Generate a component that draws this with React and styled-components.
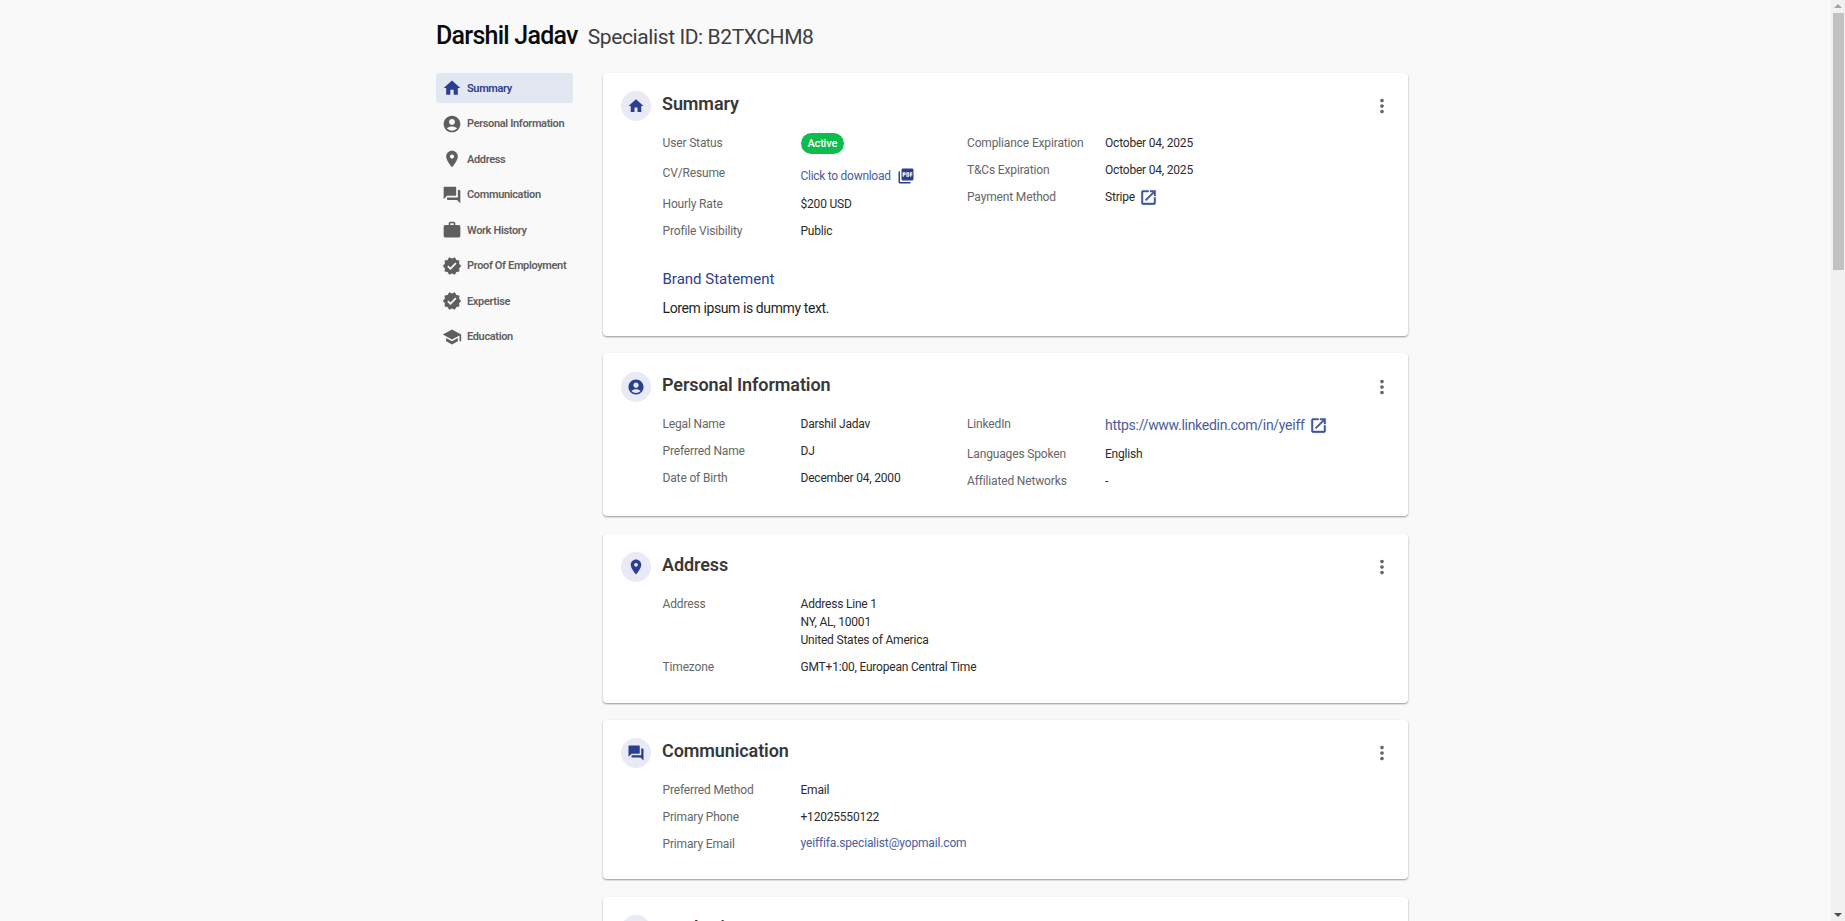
import React from "react";
import styled, { createGlobalStyle } from "styled-components";

const FONT = `"Roboto", "Liberation Sans", sans-serif`;

const ICONS = {
  home: "M10 20v-6h4v6h5v-8h3L12 3 2 12h3v8z",
  person:
    "M12 2C6.48 2 2 6.48 2 12s4.48 10 10 10 10-4.48 10-10S17.52 2 12 2zm0 4c1.93 0 3.5 1.57 3.5 3.5S13.93 13 12 13s-3.5-1.57-3.5-3.5S10.07 6 12 6zm0 14c-2.03 0-4.43-.82-6.14-2.88C7.55 15.8 9.68 15 12 15s4.45.8 6.14 2.12C16.43 19.18 14.03 20 12 20z",
  place:
    "M12 2C8.13 2 5 5.13 5 9c0 5.25 7 13 7 13s7-7.75 7-13c0-3.87-3.13-7-7-7zm0 9.5c-1.38 0-2.5-1.12-2.5-2.5s1.12-2.5 2.5-2.5 2.5 1.12 2.5 2.5-1.12 2.5-2.5 2.5z",
  forum:
    "M21 6h-2v9H6v2c0 .55.45 1 1 1h11l4 4V7c0-.55-.45-1-1-1zm-4 6V3c0-.55-.45-1-1-1H3c-.55 0-1 .45-1 1v14l4-4h10c.55 0 1-.45 1-1z",
  work: "M20 6h-4V4c0-1.11-.89-2-2-2h-4c-1.11 0-2 .89-2 2v2H4c-1.11 0-1.99.89-1.99 2L2 19c0 1.11.89 2 2 2h16c1.11 0 2-.89 2-2V8c0-1.11-.89-2-2-2zm-6 0h-4V4h4v2z",
  verified:
    "M23 12l-2.44-2.79.34-3.69-3.61-.82-1.89-3.2L12 2.96 8.6 1.5 6.71 4.69 3.1 5.5l.34 3.7L1 12l2.44 2.79-.34 3.7 3.61.82L8.6 22.5l3.4-1.47 3.4 1.46 1.89-3.19 3.61-.82-.34-3.69L23 12zm-12.91 4.72l-3.8-3.81 1.48-1.48 2.32 2.33 5.85-5.87 1.48 1.48-7.33 7.35z",
  school:
    "M5 13.18v4L12 21l7-3.82v-4L12 17l-7-3.82zM12 3L1 9l11 6 9-4.91V17h2V9L12 3z",
  more: "M12 8c1.1 0 2-.9 2-2s-.9-2-2-2-2 .9-2 2 .9 2 2 2zm0 2c-1.1 0-2 .9-2 2s.9 2 2 2 2-.9 2-2-.9-2-2-2zm0 6c-1.1 0-2 .9-2 2s.9 2 2 2 2-.9 2-2-.9-2-2-2z",
  open: "M19 19H5V5h7V3H5c-1.11 0-2 .9-2 2v14c0 1.1.89 2 2 2h14c1.1 0 2-.9 2-2v-7h-2v7zM14 3v2h3.59l-9.83 9.83 1.41 1.41L19 6.41V10h2V3h-7z",
  pdf: "M20 2H8c-1.1 0-2 .9-2 2v12c0 1.1.9 2 2 2h12c1.1 0 2-.9 2-2V4c0-1.1-.9-2-2-2zm-8.5 7.5c0 .83-.67 1.5-1.5 1.5H9v2H7.5V7H10c.83 0 1.5.67 1.5 1.5v1zm5 2c0 .83-.67 1.5-1.5 1.5h-2.5V7H15c.83 0 1.5.67 1.5 1.5v3zm4-3H19v1h1.5V11H19v2h-1.5V7h3v1.5zM9 9.5h1v-1H9v1zM4 6H2v14c0 1.1.9 2 2 2h14v-2H4V6zm10 5.5h1v-3h-1v3z",
};

const GlobalStyle = createGlobalStyle`
  html, body {
    margin: 0;
    height: 921px;
    overflow: hidden;
    background: #f9f9f9;
    font-family: ${FONT};
  }
`;

const Svg = styled.svg`
  display: block;
  flex: none;
  width: ${(p) => p.$size}px;
  height: ${(p) => p.$size}px;
  fill: ${(p) => p.$color || "currentColor"};
  stroke: ${(p) => (p.$bold ? p.$color : "none")};
  stroke-width: ${(p) => (p.$bold ? 0.6 : 0)};
`;

const Icon = ({ name, size = 24, color, bold }) => (
  <Svg viewBox="0 0 24 24" $size={size} $color={color} $bold={bold}>
    <path d={ICONS[name]} />
  </Svg>
);

const Page = styled.div`
  width: 972px;
  margin-left: 436px;
  padding-top: 18px;
`;

const Header = styled.header`
  display: flex;
  align-items: baseline;
  height: 36px;
  margin-bottom: 19px;
`;

const Name = styled.h1`
  margin: 0 10px 0 0;
  font-size: 25px;
  line-height: 36px;
  font-weight: 500;
  letter-spacing: -0.75px;
  color: #0b0b0b;
`;

const SpecialistId = styled.span`
  font-size: 21px;
  line-height: 36px;
  letter-spacing: -0.4px;
  color: #3d3d3d;
`;

const Columns = styled.div`
  display: flex;
  align-items: flex-start;
  gap: 30px;
`;

const Nav = styled.nav`
  width: 137px;
  flex: none;
  display: flex;
  flex-direction: column;
  gap: 5.5px;
`;

const NavItem = styled.a`
  display: flex;
  align-items: center;
  gap: 5px;
  height: 30px;
  padding-left: 6px;
  border-radius: 3px;
  font-size: 11px;
  font-weight: 600;
  letter-spacing: -0.35px;
  white-space: nowrap;
  color: ${(p) => (p.$active ? "#2c3e8f" : "#5f5f5f")};
  background: ${(p) => (p.$active ? "#e3e7f1" : "transparent")};
`;

const Cards = styled.main`
  width: 805px;
  flex: none;
  display: flex;
  flex-direction: column;
  gap: 17.5px;
`;

const Card = styled.section`
  position: relative;
  box-sizing: border-box;
  height: ${(p) => p.$height}px;
  padding: ${(p) => p.$top || 18}px 18px 0;
  background: #fff;
  border-radius: 4px;
  box-shadow: 0 1px 2px rgba(0, 0, 0, 0.4);
`;

const CardHead = styled.div`
  display: flex;
  align-items: flex-start;
`;

const IconCircle = styled.div`
  flex: none;
  width: 30px;
  height: 30px;
  border-radius: 50%;
  background: #e8eaf6;
  color: #2c3e8f;
  display: flex;
  align-items: center;
  justify-content: center;
  margin-right: 11px;
`;

const CardTitle = styled.h2`
  flex: 1;
  margin: 1px 0 0;
  font-size: 18px;
  line-height: 24px;
  font-weight: 600;
  letter-spacing: -0.1px;
  color: #383838;
`;

const MoreButton = styled.div`
  color: #666;
  margin: 4px -3px 0 0;
`;

const CardBody = styled.div`
  padding-left: 41.5px;
  margin-top: 13px;
`;

const Grid = styled.div`
  display: flex;
`;

const Column = styled.div`
  width: ${(p) => p.$width}px;
  flex: none;
`;

const Row = styled.div`
  display: flex;
  min-height: ${(p) => p.$height || 27}px;
  font-size: 12px;
  line-height: 18px;
`;

const Label = styled.div`
  width: 138px;
  flex: none;
  letter-spacing: -0.15px;
  color: #666;
`;

const Value = styled.div`
  display: flex;
  align-items: center;
  gap: ${(p) => p.$gap || 4}px;
  align-self: flex-start;
  margin-top: ${(p) => p.$top || 0}px;
  letter-spacing: -0.2px;
  color: #2b2b2b;

  svg {
    margin: -1px 0;
  }
`;

const AddressLines = styled.div`
  letter-spacing: -0.2px;
  color: #2b2b2b;
`;

const Link = styled.a`
  color: #4a5d9c;
  font-size: ${(p) => p.$size || 12}px;
  letter-spacing: ${(p) => p.$spacing || -0.15}px;
`;

const Badge = styled.span`
  display: inline-block;
  height: 21px;
  line-height: 21px;
  margin-top: -1px;
  padding: 0 7px;
  border-radius: 11px;
  background: #0cbc4d;
  color: #fff;
  font-size: 11px;
  font-weight: 500;
`;

const SubTitle = styled.h3`
  margin: 19px 0 0;
  font-size: 15px;
  line-height: 22px;
  font-weight: 400;
  color: #2c3e8f;
`;

const BrandText = styled.p`
  margin: 8px 0 0;
  font-size: 14px;
  line-height: 20px;
  letter-spacing: -0.4px;
  color: #1f1f1f;
`;

const ScrollTrack = styled.div`
  position: fixed;
  top: 0;
  right: 0;
  width: 14px;
  height: 921px;
  background: #f1f1f1;
`;

const ScrollThumb = styled.div`
  position: absolute;
  top: 13px;
  left: 2px;
  width: 11px;
  height: 257px;
  background: #c1c1c1;
`;

const ScrollArrow = styled.div`
  position: absolute;
  left: 3px;
  width: 0;
  height: 0;
  border-left: 4px solid transparent;
  border-right: 4px solid transparent;
  ${(p) =>
    p.$down
      ? "bottom: 4px; border-top: 4px solid #505050;"
      : "top: 4px; border-bottom: 4px solid #a3a3a3;"}
`;

const NAV_ITEMS = [
  ["home", "Summary"],
  ["person", "Personal Information"],
  ["place", "Address"],
  ["forum", "Communication"],
  ["work", "Work History"],
  ["verified", "Proof Of Employment"],
  ["verified", "Expertise"],
  ["school", "Education"],
];

const OPEN_COLOR = "#3f5596";

const CardHeader = ({ icon, title }) => (
  <CardHead>
    <IconCircle>
      <Icon name={icon} size={18} />
    </IconCircle>
    <CardTitle>{title}</CardTitle>
    <MoreButton>
      <Icon name="more" size={22} />
    </MoreButton>
  </CardHead>
);

const App = () => (
  <>
    <GlobalStyle />
    <Page>
      <Header>
        <Name>Darshil Jadav</Name>
        <SpecialistId>Specialist ID: B2TXCHM8</SpecialistId>
      </Header>
      <Columns>
        <Nav>
          {NAV_ITEMS.map(([icon, label], i) => (
            <NavItem key={label} $active={i === 0}>
              <Icon name={icon} size={20} />
              {label}
            </NavItem>
          ))}
        </Nav>
        <Cards>
          <Card $height={262.5}>
            <CardHeader icon="home" title="Summary" />
            <CardBody>
              <Grid>
                <Column $width={304.5}>
                  <Row $height={30}>
                    <Label>User Status</Label>
                    <Value>
                      <Badge>Active</Badge>
                    </Value>
                  </Row>
                  <Row $height={31}>
                    <Label>CV/Resume</Label>
                    <Value $top={3} $gap={6}>
                      <Link $spacing={-0.28}>Click to download</Link>
                      <Icon name="pdf" size={18} color="#2c3e8f" />
                    </Value>
                  </Row>
                  <Row>
                    <Label>Hourly Rate</Label>
                    <Value>$200 USD</Value>
                  </Row>
                  <Row>
                    <Label>Profile Visibility</Label>
                    <Value>Public</Value>
                  </Row>
                </Column>
                <Column $width={400}>
                  <Row>
                    <Label>Compliance Expiration</Label>
                    <Value>October 04, 2025</Value>
                  </Row>
                  <Row>
                    <Label>T&amp;Cs Expiration</Label>
                    <Value>October 04, 2025</Value>
                  </Row>
                  <Row>
                    <Label>Payment Method</Label>
                    <Value>
                      Stripe
                      <Icon name="open" size={19} color={OPEN_COLOR} bold />
                    </Value>
                  </Row>
                </Column>
              </Grid>
              <SubTitle>Brand Statement</SubTitle>
              <BrandText>Lorem ipsum is dummy text.</BrandText>
            </CardBody>
          </Card>

          <Card $height={163} $top={19}>
            <CardHeader icon="person" title="Personal Information" />
            <CardBody>
              <Grid>
                <Column $width={304.5}>
                  <Row>
                    <Label>Legal Name</Label>
                    <Value>Darshil Jadav</Value>
                  </Row>
                  <Row>
                    <Label>Preferred Name</Label>
                    <Value>DJ</Value>
                  </Row>
                  <Row>
                    <Label>Date of Birth</Label>
                    <Value>December 04, 2000</Value>
                  </Row>
                </Column>
                <Column $width={400}>
                  <Row $height={30}>
                    <Label>LinkedIn</Label>
                    <Value $top={1}>
                      <Link $size={14} $spacing={-0.28}>
                        https://www.linkedin.com/in/yeiff
                      </Link>
                      <Icon name="open" size={19} color={OPEN_COLOR} bold />
                    </Value>
                  </Row>
                  <Row>
                    <Label>Languages Spoken</Label>
                    <Value>English</Value>
                  </Row>
                  <Row>
                    <Label>Affiliated Networks</Label>
                    <Value>-</Value>
                  </Row>
                </Column>
              </Grid>
            </CardBody>
          </Card>

          <Card $height={169}>
            <CardHeader icon="place" title="Address" />
            <CardBody>
              <Row $height={63}>
                <Label>Address</Label>
                <AddressLines>
                  Address Line 1
                  <br />
                  NY, AL, 10001
                  <br />
                  United States of America
                </AddressLines>
              </Row>
              <Row>
                <Label>Timezone</Label>
                <Value>GMT+1:00, European Central Time</Value>
              </Row>
            </CardBody>
          </Card>

          <Card $height={159}>
            <CardHeader icon="forum" title="Communication" />
            <CardBody>
              <Row>
                <Label>Preferred Method</Label>
                <Value>Email</Value>
              </Row>
              <Row>
                <Label>Primary Phone</Label>
                <Value>+12025550122</Value>
              </Row>
              <Row>
                <Label>Primary Email</Label>
                <Value $top={-1}>
                  <Link>yeiffifa.specialist@yopmail.com</Link>
                </Value>
              </Row>
            </CardBody>
          </Card>

          <Card $height={200}>
            <CardHeader icon="work" title="Work History" />
          </Card>
        </Cards>
      </Columns>
    </Page>
    <ScrollTrack>
      <ScrollArrow />
      <ScrollThumb />
      <ScrollArrow $down />
    </ScrollTrack>
  </>
);

export default App;
